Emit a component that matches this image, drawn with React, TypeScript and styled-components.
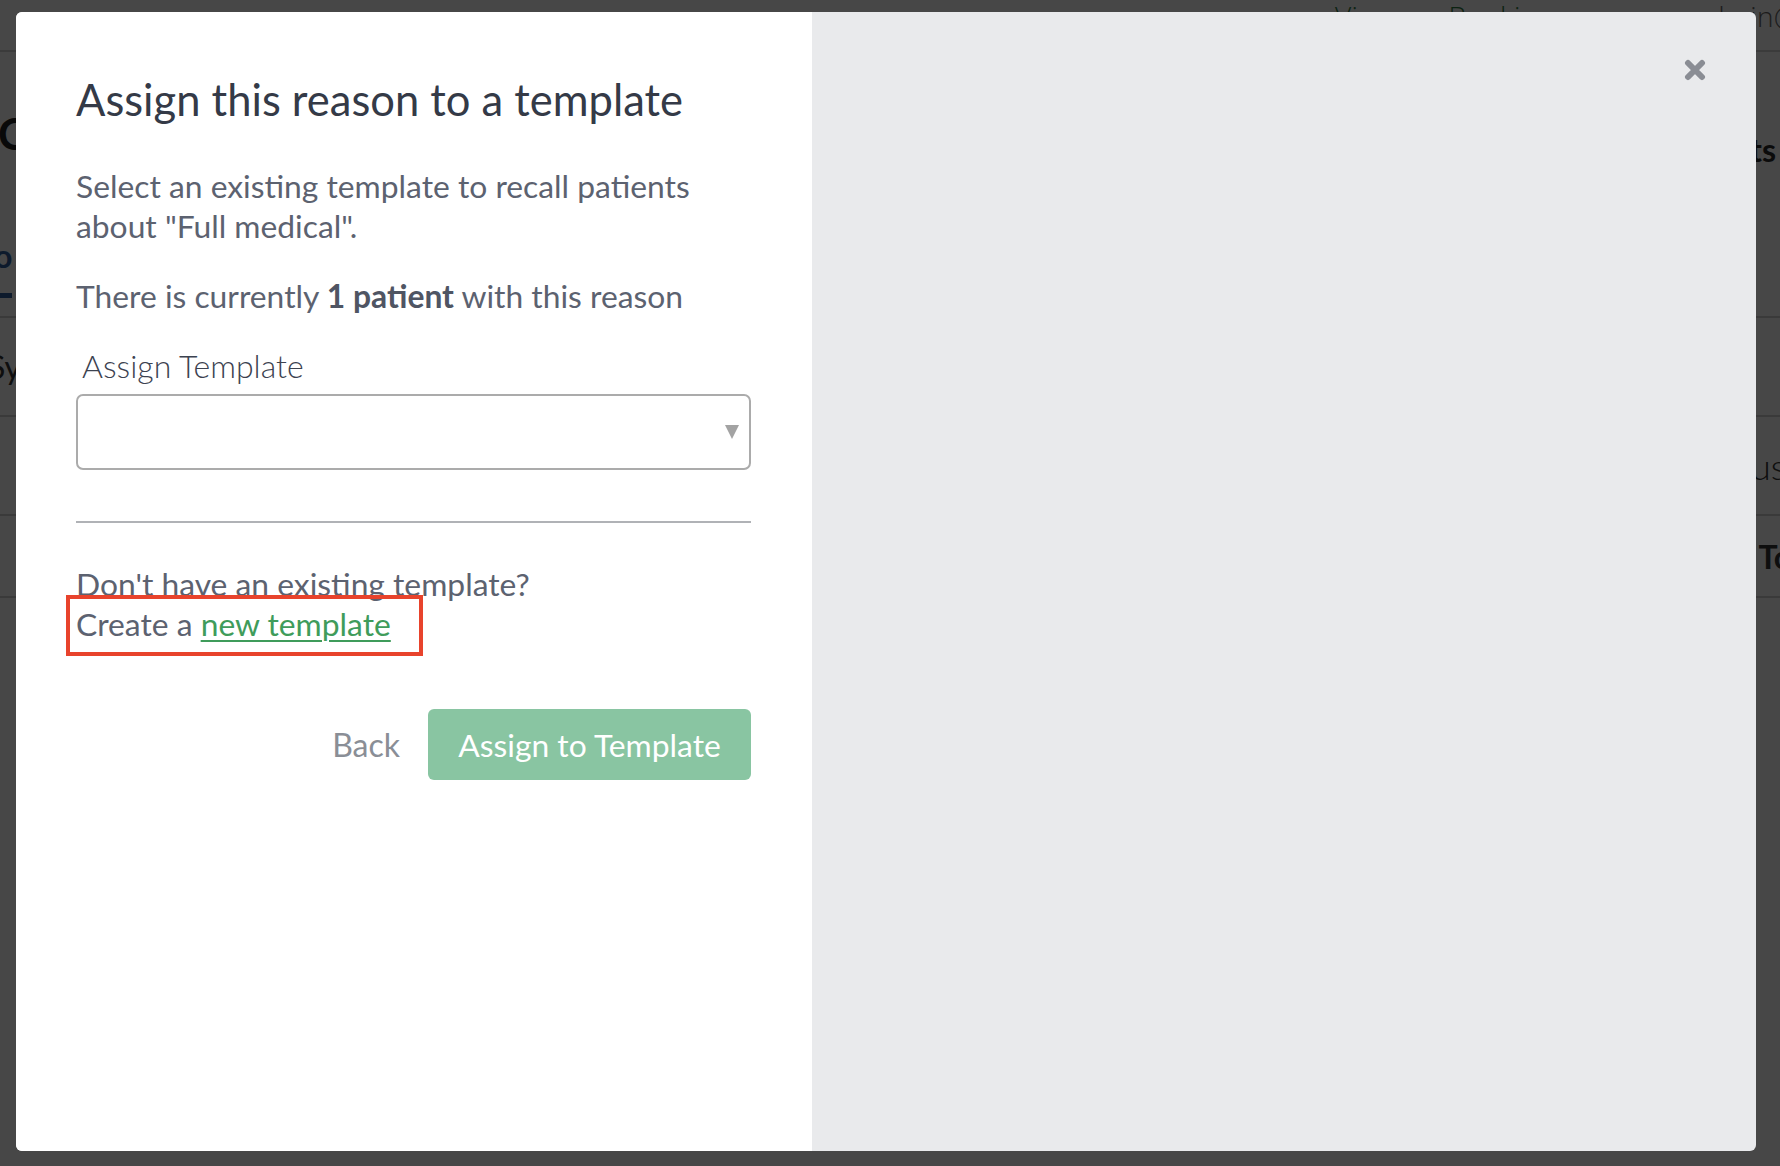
import React from "react";
import styled, { createGlobalStyle } from "styled-components";

const GlobalStyle = createGlobalStyle`
  html, body { margin: 0; padding: 0; }
  body {
    font-family: Lato, "Open Sans", "Liberation Sans", sans-serif;
    background: #ffffff;
    width: 1780px;
    height: 1166px;
    overflow: hidden;
  }
  * { box-sizing: border-box; }
`;

/* ---------- background page (dimmed behind modal) ---------- */

const Page = styled.div`
  width: 1780px;
  height: 1166px;
  background: #ffffff;
  overflow: hidden;
  display: flex;
  flex-direction: column;
`;

const TopBar = styled.header`
  height: 52px;
  flex: none;
  border-bottom: 2px solid #d2d2d2;
  display: flex;
  align-items: flex-start;
  padding: 0 0 0 1335px;
  font-family: "Open Sans", Lato, sans-serif;
  font-size: 28px;
  font-weight: 300;
  line-height: 1;
  letter-spacing: 0.4px;
  white-space: nowrap;
`;

const TopLink = styled.span`
  color: #2e7d43;
  padding-top: 2px;
`;

const TopDivider = styled.span`
  width: 2px;
  height: 44px;
  background: #9a9a9a;
  margin: 0 26px 0 30px;
`;

const TopUser = styled.span`
  color: #666;
  padding-top: 2px;
`;

const PageRow = styled.div<{ $h: number; $border?: boolean }>`
  height: ${(p) => p.$h}px;
  flex: none;
  display: flex;
  justify-content: space-between;
  align-items: center;
  border-bottom: ${(p) => (p.$border ? "2px solid #cfcfcf" : "none")};
  white-space: nowrap;
`;

const PageHeading = styled.h1`
  margin: 22px 0 0 -2px;
  font-size: 44px;
  font-weight: 700;
  color: #222;
`;

const PageSubHeading = styled.h2`
  margin: 54px 4px 0 0;
  font-size: 32px;
  font-weight: 700;
  color: #2a2a2a;
`;

const TabCol = styled.div`
  display: flex;
  flex-direction: column;
  align-self: flex-start;
  margin-top: 44px;
  margin-left: -44px;
`;

const TabLabel = styled.span`
  font-size: 32px;
  font-weight: 700;
  color: #2f5f9e;
`;

const TabBar = styled.span`
  height: 5px;
  margin-top: 18px;
  background: #2f5f9e;
`;

const CellText = styled.span<{ $bold?: boolean; $light?: boolean; $offset?: number; $trail?: number }>`
  font-size: ${(p) => (p.$light ? 36 : 32)}px;
  font-weight: ${(p) => (p.$bold ? 700 : p.$light ? 300 : 400)};
  color: #333;
  margin-left: ${(p) => p.$offset ?? 0}px;
  margin-right: ${(p) => p.$trail ?? 4}px;
`;

/* ---------- modal ---------- */

const Overlay = styled.div`
  position: fixed;
  inset: 0;
  background: rgba(0, 0, 0, 0.72);
`;

const Modal = styled.div`
  position: fixed;
  top: 12px;
  left: 16px;
  width: 1740px;
  height: 1139px;
  border-radius: 6px;
  overflow: hidden;
  display: flex;
  background: #e9eaec;
`;

const LeftPane = styled.section`
  width: 796px;
  flex: none;
  background: #ffffff;
  padding: 60px 61px 0 60px;
  display: flex;
  flex-direction: column;
`;

const Title = styled.h2`
  margin: 0;
  font-size: 43.5px;
  font-weight: 400;
  line-height: 55px;
  color: #343a47;
`;

const Text = styled.p<{ $mt: number }>`
  margin: ${(p) => p.$mt}px 0 0;
  font-size: 31.8px;
  line-height: 40px;
  color: #5c6270;
`;

const Strong = styled.strong`
  font-weight: 700;
  color: #4f5563;
`;

const FieldLabel = styled.label`
  margin-top: 31px;
  padding-left: 6px;
  font-size: 32px;
  font-weight: 300;
  line-height: 1.2;
  color: #3c4250;
`;

const SelectBox = styled.div`
  margin-top: 9px;
  height: 76px;
  border: 2px solid #ababab;
  border-radius: 7px;
  display: flex;
  align-items: center;
  justify-content: flex-end;
  padding-right: 10px;
`;

const Caret = styled.span`
  width: 0;
  height: 0;
  border-left: 7.5px solid transparent;
  border-right: 7.5px solid transparent;
  border-top: 14px solid #a3a3a3;
`;

const Rule = styled.hr`
  margin: 51px 0 0;
  border: none;
  height: 2px;
  background: #b0b2b6;
`;

const Annotated = styled.span`
  position: relative;
  display: inline-block;
`;

const Highlight = styled.span`
  position: absolute;
  left: -10px;
  top: -9px;
  width: 357px;
  height: 61px;
  border: 4px solid #e8432c;
  pointer-events: none;
`;

const Link = styled.a`
  color: #3f9c5b;
  text-decoration: underline;
  text-decoration-thickness: 2px;
  text-underline-offset: 4px;
  cursor: pointer;
`;

const Actions = styled.div`
  margin-top: 65px;
  display: flex;
  justify-content: flex-end;
  align-items: center;
  gap: 28px;
`;

const BackButton = styled.button`
  border: none;
  background: none;
  padding: 0;
  font-family: inherit;
  font-size: 32px;
  color: #8a8e96;
  cursor: pointer;
`;

const PrimaryButton = styled.button`
  width: 323px;
  height: 71px;
  border: none;
  border-radius: 6px;
  background: #89c5a2;
  color: #ffffff;
  font-family: inherit;
  font-size: 31.8px;
  cursor: pointer;
`;

const RightPane = styled.aside`
  flex: 1;
  display: flex;
  justify-content: flex-end;
  align-items: flex-start;
  padding: 47px 50px 0 0;
`;

const CloseButton = styled.button`
  width: 22px;
  height: 22px;
  border: none;
  background: none;
  padding: 0;
  display: flex;
  cursor: pointer;
`;

export default function App() {
  return (
    <>
      <GlobalStyle />
      <Page>
        <TopBar>
          <TopLink>View my Bookings page</TopLink>
          <TopDivider />
          <TopUser>admin@clinic.com</TopUser>
        </TopBar>
        <PageRow $h={140}>
          <PageHeading>Contacts</PageHeading>
          <PageSubHeading>Recall Appointments</PageSubHeading>
        </PageRow>
        <PageRow $h={126} $border>
          <TabCol>
            <TabLabel>Info</TabLabel>
            <TabBar />
          </TabCol>
        </PageRow>
        <PageRow $h={99} $border>
          <CellText $offset={-12}>Sydney</CellText>
        </PageRow>
        <PageRow $h={99} $border>
          <span />
          <CellText $light $trail={-6}>Status</CellText>
        </PageRow>
        <PageRow $h={82} $border>
          <span />
          <CellText $bold $trail={-48}>Total</CellText>
        </PageRow>
      </Page>

      <Overlay />
      <Modal role="dialog" aria-modal="true">
        <LeftPane>
          <Title>Assign this reason to a template</Title>
          <Text $mt={39}>
            Select an existing template to recall patients about "Full medical".
          </Text>
          <Text $mt={30}>
            There is currently <Strong>1 patient</Strong> with this reason
          </Text>
          <FieldLabel>Assign Template</FieldLabel>
          <SelectBox>
            <Caret />
          </SelectBox>
          <Rule />
          <Text $mt={41}>
            Don't have an existing template?
            <br />
            <Annotated>
              Create a <Link>new template</Link>
              <Highlight />
            </Annotated>
          </Text>
          <Actions>
            <BackButton>Back</BackButton>
            <PrimaryButton>Assign to Template</PrimaryButton>
          </Actions>
        </LeftPane>
        <RightPane>
          <CloseButton aria-label="Close">
            <svg width="22" height="22" viewBox="0 0 22 22">
              <path
                d="M4 4 L18 18 M18 4 L4 18"
                stroke="#8a8d94"
                strokeWidth="6"
                strokeLinecap="round"
              />
            </svg>
          </CloseButton>
        </RightPane>
      </Modal>
    </>
  );
}
